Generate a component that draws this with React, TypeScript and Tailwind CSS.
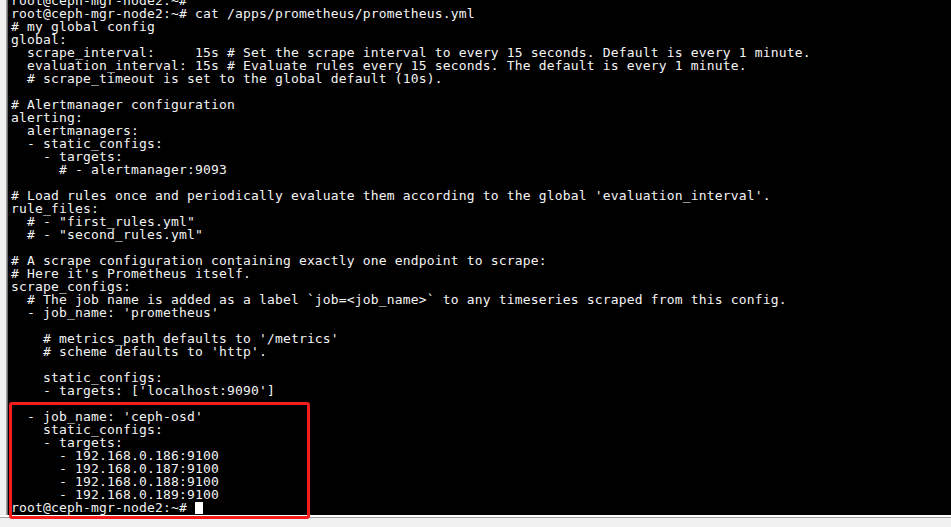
import React from "react";

const lines: string[] = [
  "root@ceph-mgr-node2:~#",
  "root@ceph-mgr-node2:~# cat /apps/prometheus/prometheus.yml",
  "# my global config",
  "global:",
  "  scrape_interval:     15s # Set the scrape interval to every 15 seconds. Default is every 1 minute.",
  "  evaluation_interval: 15s # Evaluate rules every 15 seconds. The default is every 1 minute.",
  "  # scrape_timeout is set to the global default (10s).",
  "",
  "# Alertmanager configuration",
  "alerting:",
  "  alertmanagers:",
  "  - static_configs:",
  "    - targets:",
  "      # - alertmanager:9093",
  "",
  "# Load rules once and periodically evaluate them according to the global 'evaluation_interval'.",
  "rule_files:",
  '  # - "first_rules.yml"',
  '  # - "second_rules.yml"',
  "",
  "# A scrape configuration containing exactly one endpoint to scrape:",
  "# Here it's Prometheus itself.",
  "scrape_configs:",
  "  # The job name is added as a label `job=<job_name>` to any timeseries scraped from this config.",
  "  - job_name: 'prometheus'",
  "",
  "    # metrics_path defaults to '/metrics'",
  "    # scheme defaults to 'http'.",
  "",
  "    static_configs:",
  "    - targets: ['localhost:9090']",
  "",
  "  - job_name: 'ceph-osd'",
  "    static_configs:",
  "    - targets:",
  "      - 192.168.0.186:9100",
  "      - 192.168.0.187:9100",
  "      - 192.168.0.188:9100",
  "      - 192.168.0.189:9100",
];

export default function App() {
  return (
    <div className="relative w-[951px] h-[527px] bg-[#f0f0f0] overflow-hidden flex flex-col">
      <div className="flex h-[515px]">
        <div className="w-[6px] bg-[#f0f0f0]" />
        <div className="w-[1px] bg-[#a0a0a0]" />
        <div className="w-[1px] bg-[#6a6a6a]" />
        <div className="flex-1 bg-black overflow-hidden pl-[3px]">
          <div
            className="mt-[-5px] text-[#f4f4f4] text-[13px] tracking-[0.17px] whitespace-pre"
            style={{ fontFamily: '"DejaVu Sans Mono", monospace' }}
          >
            {lines.map((l, i) => (
              <div key={i} className="h-[13px] leading-[12px]">
                {l}
              </div>
            ))}
            <div className="h-[13px] leading-[12px] flex">
              <span>root@ceph-mgr-node2:~# </span>
              <span className="inline-block w-[8px] h-[12px] bg-white" />
            </div>
          </div>
        </div>
      </div>
      <div className="h-[2px] bg-white" />
      <div className="h-[1px] bg-[#a0a0a0]" />
      <div className="flex-1 bg-[#f0f0f0]" />
      <div className="absolute left-[9px] top-[402px] w-[301px] h-[117px] border-[3px] border-[#f81c1c] rounded-[3px]" />
    </div>
  );
}
